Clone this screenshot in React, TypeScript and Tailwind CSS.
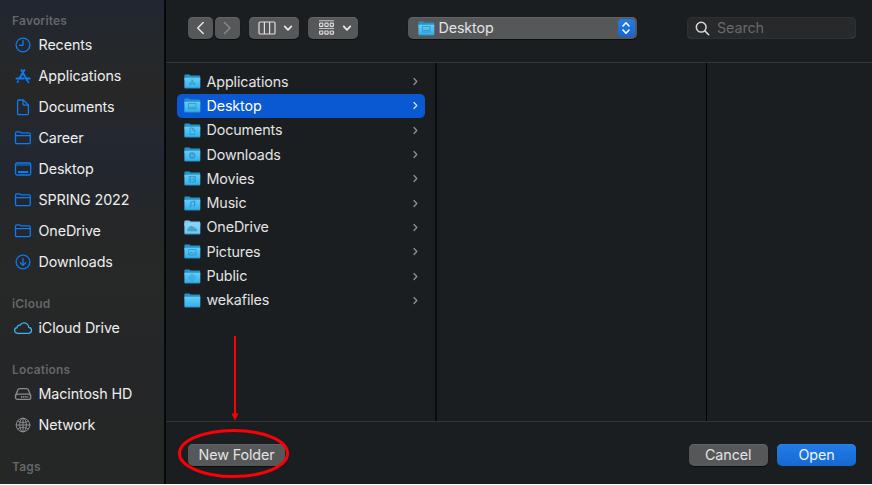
import React from "react";

const FONT = "font-['Inter','Liberation_Sans',sans-serif]";

type IconName = "clock" | "apps" | "doc" | "folder" | "desktop" | "download" | "cloud" | "disk" | "globe";

function SideIcon({ name }: { name: IconName }) {
  const color = name === "cloud" ? "#3cb4ea" : name === "disk" || name === "globe" ? "#8b8c8d" : "#0a7cf5";
  const shapes: Record<IconName, React.ReactNode> = {
    clock: (
      <>
        <circle cx="10" cy="9" r="6.9" />
        <path d="M10 4.6V9.3H6.4" />
      </>
    ),
    apps: (
      <g strokeWidth="1.9">
        <path d="M8.4 3l5.7 10.2M11.4 3L6.4 11.600M15.200 14.800l.2.400M5.100 14.200l-.5.800" />
        <path d="M3.400 11.500h7.400M13.400 11.500h3.300" />
      </g>
    ),
    doc: <path d="M5.6 2h4.6l5.200 5v8.300a1.300 1.300 0 0 1-1.300 1.300H5.900a1.300 1.300 0 0 1-1.300-1.300V3.200A1.200 1.200 0 0 1 5.600 2zM10 2.200v3.900a1 1 0 0 0 1 1h4.200" />,
    folder: (
      <>
        <path d="M2.500 13.200V4.300c0-.9.500-1.400 1.400-1.400h2.600c1.200 0 1.200 1 2.400 1h7c.9 0 1.400.500 1.400 1.400v7.900c0 .9-.500 1.400-1.400 1.400H3.900c-.9 0-1.400-.500-1.400-1.400z" />
        <path d="M2.500 6.700h14.800" />
      </>
    ),
    desktop: (
      <>
        <rect x="2.500" y="3" width="15.200" height="12" rx="1.500" />
        <path d="M2.600 5h15" strokeWidth="1.200" />
        <path d="M5 12h10.200" strokeWidth="2" strokeLinecap="butt" />
      </>
    ),
    download: (
      <>
        <circle cx="10" cy="9" r="6.900" />
        <path d="M10 5.400v6.800M7.300 9.700l2.700 2.700 2.700-2.700" />
      </>
    ),
    cloud: <path d="M5.200 14.400c-2.200 0-3.600-1.200-3.600-2.900 0-1.500 1-2.600 2.500-2.800C4 7 5.400 5.900 7 6.300 8 4.600 9.300 3.900 10.900 3.900c2.600 0 4.600 1.900 4.700 4.400 1.800.200 2.900 1.400 2.900 3 0 1.800-1.400 3.100-3.300 3.100z" />,
    disk: (
      <>
        <path d="M2.600 10.600l2.300-5.800c.300-.8.800-1.200 1.600-1.200h7.200c.8 0 1.300.400 1.600 1.200l2.300 5.800" />
        <rect x="2.500" y="9.200" width="15.200" height="5.200" rx="2" />
        <path d="M8 11.800h7.500" strokeWidth="1.700" strokeDasharray="1.100 .7" strokeLinecap="butt" />
      </>
    ),
    globe: (
      <g strokeWidth="1">
        <circle cx="10" cy="9" r="6.800" />
        <ellipse cx="10" cy="9" rx="3.300" ry="6.800" />
        <path d="M10 2.200v13.600M3.200 9h13.600M4.600 5.200c3 1.800 7.800 1.800 10.800 0M4.600 12.800c3-1.800 7.800-1.800 10.800 0" />
      </g>
    ),
  };
  return (
    <svg width="20" height="18" viewBox="0 0 20 18" fill="none" stroke={color} strokeWidth="1.3" strokeLinecap="round" strokeLinejoin="round" className="shrink-0">
      {shapes[name]}
    </svg>
  );
}

type Glyph = "apps" | "desktop" | "doc" | "download" | "film" | "music" | "cloud" | "picture" | "public" | "none";

function Folder({ glyph }: { glyph: Glyph }) {
  const glyphs: Record<Glyph, React.ReactNode> = {
    apps: <path d="M8.800 5.500l-3 5.500M7.700 5.500l3 5.500M5 9.800h6.500" />,
    desktop: (
      <>
        <rect x="4.500" y="5.500" width="7.500" height="5.500" />
        <path d="M5.500 9.500h5.500" />
      </>
    ),
    doc: <path d="M6 5h2.800L10.800 7v4.500H6zM8.600 5v2.200h2" />,
    download: (
      <>
        <circle cx="8.200" cy="8.500" r="2.500" strokeWidth="1.400" />
        <path d="M8.200 7.200v2.300" />
      </>
    ),
    film: <path d="M5 5.500h6.500v5.500H5zM6.500 5.500V11M10 5.500V11M6.500 8.200H10" />,
    music: <path d="M7 10.500V6l3.600-.800v4.500M5.500 10.700h1.500M9.200 9.900h1.400" strokeWidth="1.200" />,
    cloud: <path d="M4.800 11.300C2.500 11 2.700 8.400 4.600 8.300 5 6 8 5.200 9.600 7.200c1.700-.300 2.300.7 2.300 1.500 2 .500 1.500 2.600 0 2.600z" fill="#3e91b6" stroke="none" />,
    picture: <path d="M4.500 5.500h7.500V11H4.500zM5 10.500l2-2.500 1.500 1.500 1.200-1 2 2" />,
    public: (
      <>
        <path d="M8.200 4.900l3.500 3.500-3.500 3.500-3.500-3.500z" />
        <circle cx="8.200" cy="8.400" r="1" />
      </>
    ),
    none: null,
  };
  const light = glyph === "cloud";
  return (
    <svg width="17" height="15" viewBox="0 0 17 15" className="shrink-0">
      <defs>
        <linearGradient id={`front-${glyph}`} x1="0" y1="0" x2="0" y2="1">
          <stop offset="0" stopColor={light ? "#8ad6f9" : "#63cdf8"} />
          <stop offset="1" stopColor={light ? "#6fc4ef" : "#35aeea"} />
        </linearGradient>
      </defs>
      <path d="M.4 1.300Q.4.400 1.300.4h3.800c1 0 1.100 1.200 2.100 1.200h8.100q.9 0 .9.900V6H.4z" fill={light ? "#7ccbef" : "#2494c8"} />
      <path d={light ? "M.4 3h15.900v10.300q0 1-1 1H1.400q-1 0-1-1z" : "M.4 3.700h15.900v9.600q0 1-1 1H1.400q-1 0-1-1z"} fill={`url(#front-${glyph})`} />
      <path d="M.6 13.900h15.500" stroke="#2490c8" strokeWidth=".7" />
      <g fill="none" stroke="#258bbb" strokeWidth=".85" opacity=".75">
        {glyphs[glyph]}
      </g>
    </svg>
  );
}

function SideRow({ icon, label }: { icon: IconName; label: string }) {
  return (
    <div className="flex h-[31px] items-center gap-[5.5px] pl-[13px]">
      <SideIcon name={icon} />
      <span className={`text-[14.3px] leading-[18px] text-[#eeeeef] ${label === "Applications" ? "tracking-[-0.04px]" : "tracking-[-0.11px]"}`}>{label}</span>
    </div>
  );
}

function Heading({ label, space }: { label: string; space: string }) {
  return <div className={`h-[18px] pl-[12px] text-[12px] font-semibold leading-[19px] tracking-[0.18px] text-[#646668] ${space}`}>{label}</div>;
}

const favorites: [IconName, string][] = [
  ["clock", "Recents"],
  ["apps", "Applications"],
  ["doc", "Documents"],
  ["folder", "Career"],
  ["desktop", "Desktop"],
  ["folder", "SPRING 2022"],
  ["folder", "OneDrive"],
  ["download", "Downloads"],
];

const files: [Glyph, string][] = [
  ["apps", "Applications"],
  ["desktop", "Desktop"],
  ["doc", "Documents"],
  ["download", "Downloads"],
  ["film", "Movies"],
  ["music", "Music"],
  ["cloud", "OneDrive"],
  ["picture", "Pictures"],
  ["public", "Public"],
  ["none", "wekafiles"],
];

const BUTTON = "flex items-center rounded-[5px] bg-[#565759] shadow-[inset_0_1px_0_#636466,0_1px_1px_#0b0d0e]";

function ChevronDown() {
  return (
    <svg width="10" height="8" viewBox="0 0 10 8" fill="none" stroke="#e6e6e6" strokeWidth="1.800" strokeLinecap="round" strokeLinejoin="round">
      <path d="M1.700 2.400L5 5.800l3.300-3.400" />
    </svg>
  );
}

export default function App() {
  return (
    <div className={`relative flex h-[484px] w-[872px] overflow-hidden bg-[#1b1e20] text-[#e3e3e4] ${FONT}`}>
      <aside className="h-full w-[164px] shrink-0 overflow-hidden bg-[linear-gradient(180deg,#212631_0px,#25282b_50px,#272727_95px,#242830_140px,#22262f_165px,#252728_215px,#272828_280px,#252627_360px,#252727_484px)]">
        <Heading label="Favorites" space="mt-[11px]" />
        {favorites.map(([icon, label]) => (
          <SideRow key={label} icon={icon} label={label} />
        ))}
        <Heading label="iCloud" space="mt-[17px]" />
        <SideRow icon="cloud" label="iCloud Drive" />
        <Heading label="Locations" space="mt-[17px]" />
        <SideRow icon="disk" label="Macintosh HD" />
        <SideRow icon="globe" label="Network" />
        <Heading label="Tags" space="mt-[17px]" />
      </aside>
      <div className="w-[2px] shrink-0 bg-[#060708]" />
      <main className="flex min-w-0 flex-1 flex-col">
        <header className="flex h-[63px] shrink-0 items-start border-b border-[#323537] pl-[22px] pt-[17px]">
          <div className={`h-[22px] w-[25px] justify-center ${BUTTON}`}>
            <svg width="10" height="14" viewBox="0 0 10 14" fill="none" stroke="#e6e6e6" strokeWidth="1.500" strokeLinecap="round" strokeLinejoin="round">
              <path d="M7.200 1.500L1.700 7l5.500 5.500" />
            </svg>
          </div>
          <div className={`ml-[1.500px] h-[22px] w-[25.500px] justify-center ${BUTTON}`}>
            <svg width="10" height="14" viewBox="0 0 10 14" fill="none" stroke="#86878a" strokeWidth="1.500" strokeLinecap="round" strokeLinejoin="round">
              <path d="M2.500 1.500L8 7l-5.500 5.500" />
            </svg>
          </div>
          <div className={`ml-[9px] h-[22px] w-[50px] gap-[7px] pl-[9px] ${BUTTON}`}>
            <svg width="18" height="14" viewBox="0 0 18 14" fill="none" stroke="#dededf" strokeWidth="1.200">
              <rect x="1" y="1" width="16" height="12" rx="1.300" />
              <path d="M6.400 1v12M11.600 1v12" />
            </svg>
            <ChevronDown />
          </div>
          <div className={`ml-[9px] h-[22px] w-[50px] gap-[7px] pl-[9.500px] ${BUTTON}`}>
            <svg width="17" height="16" viewBox="0 0 17 16" fill="none" stroke="#dededf" strokeWidth="1.200">
              <path d="M1 .8h15M1 8.400h15" strokeWidth=".9" />
              <rect x="1.600" y="3.100" width="3.200" height="3.200" rx=".6" />
              <rect x="6.900" y="3.100" width="3.200" height="3.200" rx=".6" />
              <rect x="12.200" y="3.100" width="3.200" height="3.200" rx=".6" />
              <rect x="1.600" y="11" width="3.200" height="3.200" rx=".6" />
              <rect x="6.900" y="11" width="3.200" height="3.200" rx=".6" />
              <rect x="12.200" y="11" width="3.200" height="3.200" rx=".6" />
            </svg>
            <ChevronDown />
          </div>
          <div className={`ml-[50px] h-[22px] w-[228.500px] pl-[9.500px] pr-[2px] ${BUTTON}`}>
            <Folder glyph="desktop" />
            <span className="ml-[4px] flex-1 text-[14.3px] leading-[20px] tracking-[-0.11px]">Desktop</span>
            <div className="flex h-[18px] w-[17px] items-center justify-center rounded-[4px] bg-[linear-gradient(#237be8,#1766cf)]">
              <svg width="10" height="14" viewBox="0 0 10 14" fill="none" stroke="#fff" strokeWidth="1.600" strokeLinecap="round" strokeLinejoin="round">
                <path d="M2 5l3-3.200L8 5M2 9l3 3.200L8 9" />
              </svg>
            </div>
          </div>
          <div className="ml-[50.500px] flex h-[22px] w-[168.500px] items-center rounded-[5px] bg-[#27292b] pl-[8px] shadow-[inset_0_0_0_1px_#2e3032,inset_0_-1px_0_#484a4c]">
            <svg width="15" height="15" viewBox="0 0 15 15" fill="none" stroke="#d8d8d9" strokeWidth="1.500" strokeLinecap="round">
              <circle cx="6.200" cy="6.200" r="4.900" />
              <path d="M9.900 9.900l3.800 3.800" />
            </svg>
            <span className="ml-[7px] text-[14.3px] leading-[20px] tracking-[-0.1px] text-[#67696b]">Search</span>
          </div>
        </header>
        <section className="flex min-h-0 flex-1">
          <div className="w-[269px] shrink-0 pl-[11px] pr-[10.500px] pt-[6.500px]">
            {files.map(([glyph, label]) => (
              <div key={label} className={`flex h-[24.3px] items-center rounded-[5px] pl-[7px] pr-[6px] ${label === "Desktop" ? "bg-[#0a59d2] text-[#ffffff]" : ""}`}>
                <Folder glyph={glyph} />
                <span className="ml-[5.500px] flex-1 text-[14.3px] leading-[20px] tracking-[-0.11px]">{label}</span>
                <svg width="7" height="9" viewBox="0 0 7 9" fill="none" stroke={label === "Desktop" ? "#d2e1f8" : "#8f9091"} strokeWidth="1.300" strokeLinecap="round" strokeLinejoin="round">
                  <path d="M2 1.500l2.800 3L2 7.500" />
                </svg>
              </div>
            ))}
          </div>
          <div className="w-[2px] bg-[#090b0c]" />
          <div className="w-[269px]" />
          <div className="w-[1px] bg-[#000000]" />
        </section>
        <footer className="flex h-[63px] shrink-0 items-start border-t border-[#323537] pl-[22px] pt-[22px] text-[14.3px] leading-[22px]">
          <div className={`h-[22px] w-[97px] justify-center tracking-[-0.1px] ${BUTTON}`}>New Folder</div>
          <div className={`ml-[403.500px] h-[22px] w-[79.500px] justify-center tracking-[-0.06px] ${BUTTON}`}>Cancel</div>
          <div className="ml-[9px] flex h-[22px] w-[79px] items-center justify-center rounded-[5px] bg-[linear-gradient(#217ce8,#1768d1)] tracking-[-0.1px] text-[#f0f5fc] shadow-[inset_0_1px_0_#2b82ea]">Open</div>
        </footer>
      </main>
      <svg className="pointer-events-none absolute left-[170px] top-[330px]" width="130" height="154" viewBox="170 330 130 154" fill="none">
        <path d="M235 336v80" stroke="#fb0007" strokeWidth="2" />
        <path d="M231.500 413.500h7l-3.500 7z" fill="#fb0007" />
        <ellipse cx="233.500" cy="453.500" rx="54" ry="23" stroke="#fb0007" strokeWidth="3" />
      </svg>
    </div>
  );
}
